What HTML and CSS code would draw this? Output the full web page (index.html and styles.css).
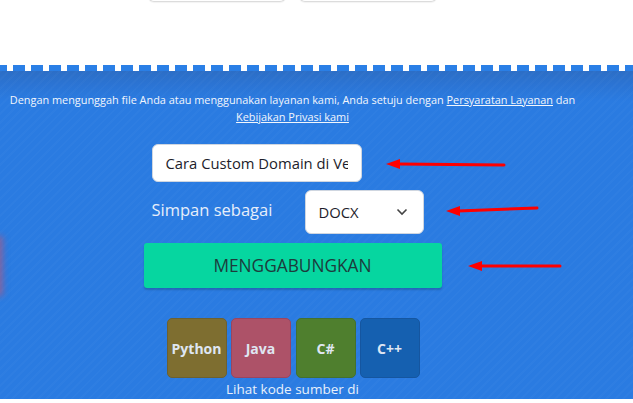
FILE: index.html
```html
<!DOCTYPE html>
<html>
<head>
    <title>Menggabungkan</title>
    <link rel="stylesheet" href="styles.css">
</head>
<body>
    <div class="top">
        <div class="top-buttons">
            <div class="top-btn"></div>
            <div class="top-btn"></div>
        </div>
    </div>

    <div class="edge"></div>

    <div class="main">
        <div class="wrap">
            <p class="terms">
                Dengan mengunggah file Anda atau menggunakan layanan kami, Anda setuju dengan <a href="#">Persyaratan Layanan</a> dan <a href="#">Kebijakan Privasi kami</a>
            </p>

            <div class="form">
                <input class="name-input" type="text" value="Cara Custom Domain di Vercel">
                <div class="save-row">
                    <span class="save-label">Simpan sebagai</span>
                    <div class="select">
                        <span>DOCX</span>
                        <svg width="12" height="8" viewBox="0 0 12 8"><path d="M1.5 1.5 L6 6 L10.5 1.5" fill="none" stroke="#444" stroke-width="1.6"/></svg>
                    </div>
                </div>
                <button class="merge-btn">MENGGABUNGKAN</button>
            </div>

            <div class="langs">
                <div class="lang python">Python</div>
                <div class="lang java">Java</div>
                <div class="lang csharp">C#</div>
                <div class="lang cpp">C++</div>
            </div>
            <div class="source">Lihat kode sumber di</div>
        </div>

        <!-- annotation arrows -->
        <svg class="arrows" width="633" height="403" viewBox="0 0 633 403">
            <g stroke="#ff0000" stroke-width="3" fill="#ff0000" stroke-linecap="round">
                <line x1="504" y1="165" x2="398" y2="164"/>
                <polygon points="386,164 400,159 400,169" stroke="none"/>
                <line x1="537" y1="208" x2="458" y2="211"/>
                <polygon points="446,211 460,206 460,216" stroke="none"/>
                <line x1="560" y1="266" x2="480" y2="266"/>
                <polygon points="468,266 482,261 482,271" stroke="none"/>
            </g>
        </svg>
        <div class="side-glow"></div>
    </div>
</body>
</html>
```

FILE: styles.css
```css
body {
    margin: 0;
    font-family: "Open Sans", "Noto Sans", sans-serif;
    background: #fff;
    overflow: hidden;
}
.top {
    height: 65px;
    width: 585px;
    overflow: hidden;
}
.top-buttons {
    display: flex;
    justify-content: center;
    gap: 13px;
    margin-top: -18px;
}
.top-btn {
    width: 136px;
    height: 19px;
    border: 1px solid #dcdcdc;
    border-top: none;
    border-radius: 0 0 6px 6px;
    box-shadow: 0 1px 1px rgba(0,0,0,0.05);
}
.edge {
    height: 6px;
    background: repeating-linear-gradient(90deg, #2a7fe6 0 12px, #fff 12px 18px);
    background-position: -5px 0;
}
.main {
    position: relative;
    height: 328px;
    background-color: #2a7be1;
    background-image:
        repeating-linear-gradient(-45deg, rgba(255,255,255,0.02) 0 2px, transparent 2px 6px),
        linear-gradient(180deg, #2c6ec6 0px, #2b74d4 14px, #2a7be1 30px);
}
.wrap {
    width: 585px;
    text-align: center;
    padding-top: 20px;
}
.terms {
    margin: 0;
    font-size: 10.9px;
    line-height: 17px;
    color: #f2f6fc;
}
.terms a {
    color: #f2f6fc;
}
.form {
    width: 298px;
    margin: 19px auto 0;
    display: flex;
    flex-direction: column;
    align-items: flex-start;
    text-align: left;
}
.name-input {
    margin-left: 8px;
    width: 210px;
    height: 38px;
    box-sizing: border-box;
    border: 1px solid #cfd6e0;
    border-radius: 6px;
    padding: 0 13px;
    font-family: inherit;
    font-size: 14.8px;
    color: #1d1d2b;
    background: #fff;
}
.save-row {
    display: flex;
    align-items: center;
    margin: 8px 0 0 8px;
}
.save-label {
    width: 153px;
    font-size: 16.5px;
    color: #e6eefa;
    margin-top: -6px;
}
.select {
    width: 119px;
    height: 44px;
    box-sizing: border-box;
    background: #fff;
    border: 1px solid #cfd6e0;
    border-radius: 6px;
    display: flex;
    align-items: center;
    justify-content: space-between;
    padding: 0 15px 0 13px;
    font-size: 14.8px;
    color: #1d1d2b;
}
.merge-btn {
    margin-top: 9px;
    width: 298px;
    height: 45px;
    border: none;
    border-radius: 3px;
    background: #06d6a0;
    color: #1d3b3c;
    font-family: inherit;
    font-size: 17.3px;
    box-shadow: 0 2px 2px rgba(0,0,0,0.18);
}
.langs {
    display: flex;
    justify-content: center;
    gap: 4px;
    margin: 30px 0 0 1px;
}
.lang {
    width: 60px;
    height: 60px;
    box-sizing: border-box;
    border-radius: 5px;
    display: flex;
    align-items: center;
    justify-content: center;
    font-size: 14px;
    font-weight: bold;
    color: #dfe6f2;
}
.python { background: #7e6e30; border: 1px solid #6d6030; }
.java { background: #ad5268; border: 1px solid #9a4560; }
.csharp { background: #4f7f2e; border: 1px solid #437030; margin-left: 1px; }
.cpp { background: #1560b0; border: 1px solid #1556a0; }
.source {
    font-size: 13.5px;
    color: #e8f0fb;
    line-height: 18px;
    margin-top: 2px;
}
.arrows {
    position: absolute;
    left: 0;
    top: -71px;
    pointer-events: none;
}
.side-glow {
    position: absolute;
    left: -6px;
    top: 165px;
    width: 9px;
    height: 60px;
    background: rgba(200, 80, 110, 0.55);
    filter: blur(3px);
}
```
